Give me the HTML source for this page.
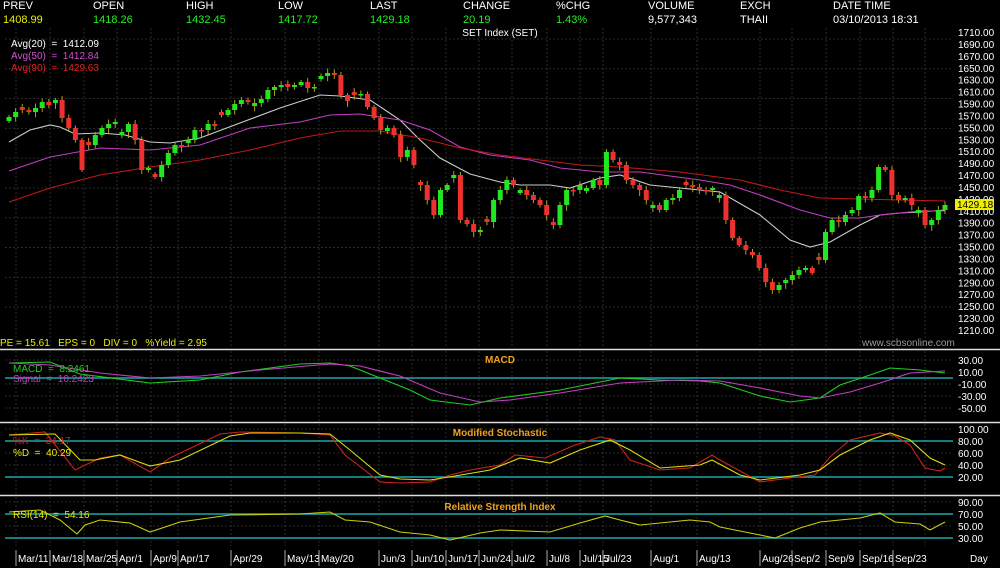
<!DOCTYPE html>
<html><head><meta charset="utf-8"><style>
html,body{margin:0;padding:0;background:#000;width:1000px;height:568px;overflow:hidden;font-family:"Liberation Sans",sans-serif}
.t{position:absolute;font-size:11px;white-space:nowrap}
</style></head><body>
<div style="position:relative;width:1000px;height:568px">
<div class="t" style="left:3px;top:0;color:#fff">PREV</div><div class="t" style="left:3px;top:14px;color:#ee0">1408.99</div>
<div class="t" style="left:93px;top:0;color:#fff">OPEN</div><div class="t" style="left:93px;top:14px;color:#2e2">1418.26</div>
<div class="t" style="left:186px;top:0;color:#fff">HIGH</div><div class="t" style="left:186px;top:14px;color:#2e2">1432.45</div>
<div class="t" style="left:278px;top:0;color:#fff">LOW</div><div class="t" style="left:278px;top:14px;color:#2e2">1417.72</div>
<div class="t" style="left:370px;top:0;color:#fff">LAST</div><div class="t" style="left:370px;top:14px;color:#2e2">1429.18</div>
<div class="t" style="left:463px;top:0;color:#fff">CHANGE</div><div class="t" style="left:463px;top:14px;color:#2e2">20.19</div>
<div class="t" style="left:556px;top:0;color:#fff">%CHG</div><div class="t" style="left:556px;top:14px;color:#2e2">1.43%</div>
<div class="t" style="left:648px;top:0;color:#fff">VOLUME</div><div class="t" style="left:648px;top:14px;color:#fff">9,577,343</div>
<div class="t" style="left:740px;top:0;color:#fff">EXCH</div><div class="t" style="left:740px;top:14px;color:#fff">THAII</div>
<div class="t" style="left:833px;top:0;color:#fff">DATE TIME</div><div class="t" style="left:833px;top:14px;color:#fff">03/10/2013 18:31</div>
<svg id="s" width="1000" height="568" style="position:absolute;left:0;top:0" font-family="Liberation Sans,sans-serif" font-size="10"></svg>
</div>
<script>
var s=document.getElementById('s'),h='';
function L(x1,y1,x2,y2,c,w,d){h+='<line x1="'+x1+'" y1="'+y1+'" x2="'+x2+'" y2="'+y2+'" stroke="'+c+'" stroke-width="'+(w||1)+'"'+(d?' stroke-dasharray="'+d+'"':'')+'/>';}
function T(x,y,t,c,a,fw){h+='<text xml:space="preserve" x="'+x+'" y="'+y+'" fill="'+c+'"'+(a?' text-anchor="'+a+'"':'')+(fw?' font-weight="bold"':'')+'>'+t+'</text>';}
function P(pts,c){var d='';for(var i=0;i<pts.length;i+=2)d+=(i?'L':'M')+pts[i]+' '+pts[i+1];h+='<path d="'+d+'" fill="none" stroke="'+c+'" stroke-width="1.1"/>';}
var dx=[16,50,84,117,151,178,231,285,319,379,412,446,479,512,547,580,603,651,697,760,792,826,860,893];
var vx=dx.concat([925]);
var panels=[[28,348],[351,421],[424,494],[497,546]];
panels.forEach(function(p){vx.forEach(function(x){L(x,p[0],x,p[1],'#2a2a2a',1,'2,2');});});
for(var pr=1250;pr<=1700;pr+=50){var y=33+(1710-pr)*0.596;L(5,y,953,y,'#2a2a2a',1,'2,2');}
[360,384,396,408].forEach(function(y){L(5,y,953,y,'#2a2a2a',1,'2,2')});
[429,453,465].forEach(function(y){L(5,y,953,y,'#2a2a2a',1,'2,2')});
[502,526].forEach(function(y){L(5,y,953,y,'#2a2a2a',1,'2,2')});
L(0,349.5,1000,349.5,'#ddd',1.5);L(0,422.5,1000,422.5,'#ddd',1.5);L(0,495.5,1000,495.5,'#ddd',1.5);
for(var pr=1710;pr>=1210;pr-=20){T(958,36+(1710-pr)*0.596,pr+'.00','#fff');}
T(500,36,'SET Index (SET)','#fff','middle');
P([9,142,30,130,50,125,60,127,75,134,100,133,125,135,150,142,170,143,200,138,240,123,280,108,320,95,340,96,370,100,400,120,420,140,440,158,470,174,500,182,520,185,550,185,570,188,600,178,620,175,650,185,700,190,720,192,760,215,790,240,810,247,830,242,860,225,880,215,900,213,920,212,945,210],'#ccc');
P([9,171,50,157,100,148,150,150,200,145,250,128,300,122,330,115,360,114,400,120,430,130,460,147,490,155,530,160,560,168,600,172,640,172,700,180,730,185,760,195,800,210,830,218,860,218,880,215,920,211,945,211],'#c040c0');
P([9,202,50,188,100,175,150,167,200,160,250,150,300,138,340,131,380,131,420,138,460,148,500,155,540,160,580,165,620,167,680,172,740,180,780,190,820,198,860,199,900,200,945,201],'#c01818');
var c=[117,112,110,112,108,102,105,100,118,128,140,170,145,135,128,124,122,132,124,140,170,168,177,165,153,145,147,140,130,130,124,126,115,110,104,100,102,103,99,90,87,85,87,85,82,88,87,76,73,75,95,101,95,94,107,118,130,128,135,157,150,165,185,200,215,190,185,175,220,224,232,230,222,200,190,180,185,190,195,200,205,215,225,205,190,190,185,188,180,185,152,160,165,180,185,190,200,205,210,200,198,190,185,187,190,190,188,195,220,238,245,250,255,268,282,290,285,280,275,270,268,273,260,232,220,222,215,210,196,198,190,167,170,195,200,198,205,210,225,220,210,205];
var n=c.length,prev=c[0]+4;
for(var i=0;i<n;i++){var x=9+i*(936/(n-1)),o=(i%5==2)?c[i]+ (i%2?3:-3):prev,cl=c[i];var up=cl<o;var col=up?'#22e622':'#ee3030';var t=Math.min(o,cl),b=Math.max(o,cl);if(b-t<1.5){b=t+1.5;}
var r=((i*37)%11)/2;L(x,t-2-r%3,x,b+2+(r*1.3)%4,'#b0a020',1);h+='<rect x="'+(x-2.5)+'" y="'+t+'" width="5" height="'+(b-t)+'" fill="'+col+'"/>';prev=cl;}
h+='<rect x="955" y="199" width="39" height="11" fill="#ee0"/>';T(957,208,'1429.18','#000');
T(11,47,'Avg(20)  =  1412.09','#fff');T(11,59,'Avg(50)  =  1412.84','#d050d0');T(11,71,'Avg(90)  =  1429.63','#e02020');
T(0,346,'PE = 15.61   EPS = 0   DIV = 0   %Yield = 2.95','#ee0');T(862,346,'www.scbsonline.com','#999');
L(5,378,953,378,'#1aa8a8',1.5);
P([9,363,50,362,80,374,150,383,200,380,240,372,300,364,330,363,350,366,380,378,410,390,430,400,470,405,500,398,560,390,600,382,620,378,660,380,700,381,720,383,760,396,790,402,820,398,840,385,870,375,890,368,920,370,945,373],'#22cc22');
P([9,363,50,365,100,373,150,378,200,376,260,370,330,364,360,366,400,376,440,393,480,402,510,400,560,393,620,383,680,380,720,381,760,388,800,396,820,398,850,392,880,383,910,373,945,371],'#c040c0');
T(500,363,'MACD','#f0a020','middle',1);T(13,372,'MACD  =  8.2461','#22cc22');T(13,382,'Signal  =  10.2423','#c040c0');
[30,10,-10,-30,-50].forEach(function(v,k){T(958,364+k*12,v.toFixed(2),'#fff');});
L(5,441,953,441,'#1aa8a8',1.5);L(5,477,953,477,'#1aa8a8',1.5);
P([9,435,45,432,75,470,100,458,120,455,150,472,170,458,220,434,240,432,300,433,330,435,345,455,380,482,400,483,430,482,450,475,470,470,500,465,515,455,545,458,575,445,600,437,615,440,630,460,660,470,690,468,712,455,720,460,760,482,790,478,815,475,830,457,850,440,880,433,895,436,910,445,925,468,940,471,945,468],'#d02020');
P([9,435,55,434,80,460,95,460,120,455,150,466,180,460,230,436,250,433,300,433,330,434,350,450,380,475,400,479,430,480,455,476,490,470,520,458,550,463,580,450,610,440,630,450,660,468,700,465,712,460,740,475,760,480,800,475,820,470,840,455,870,440,890,433,910,440,930,458,945,465],'#dddd10');
T(500,436,'Modified Stochastic','#f0a020','middle',1);T(13,444,'%K  =  34.17','#d02020');T(13,456,'%D  =  40.29','#ee0');
[100,80,60,40,20].forEach(function(v,k){T(958,433+k*12,v.toFixed(2),'#fff');});
L(5,514,953,514,'#1aa8a8',1.5);L(5,538,953,538,'#1aa8a8',1.5);
P([9,512,40,510,60,520,77,534,85,525,100,520,130,523,150,532,180,522,230,515,300,514,330,512,345,520,370,522,400,532,430,535,450,540,480,533,500,530,550,532,580,523,605,516,620,520,640,525,690,520,710,522,720,527,760,535,775,538,800,528,820,522,860,518,880,513,895,522,920,524,930,530,945,522],'#cccc10');
T(500,510,'Relative Strength Index','#f0a020','middle',1);T(13,518,'RSI(14)  =  54.16','#ee0');
[90,70,50,30].forEach(function(v,k){T(958,506+k*12,v.toFixed(2),'#fff');});
var dl=['Mar/11','Mar/18','Mar/25','Apr/1','Apr/9','Apr/17','Apr/29','May/13','May/20','Jun/3','Jun/10','Jun/17','Jun/24','Jul/2','Jul/8','Jul/15','Jul/23','Aug/1','Aug/13','Aug/26','Sep/2','Sep/9','Sep/16','Sep/23'];
dl.forEach(function(t,k){var x=dx[k];L(x,550,x,566,'#aaa',1);T(x+2,562,t,'#fff');});
T(970,562,'Day','#fff');
s.innerHTML=h;
</script>
</body></html>
